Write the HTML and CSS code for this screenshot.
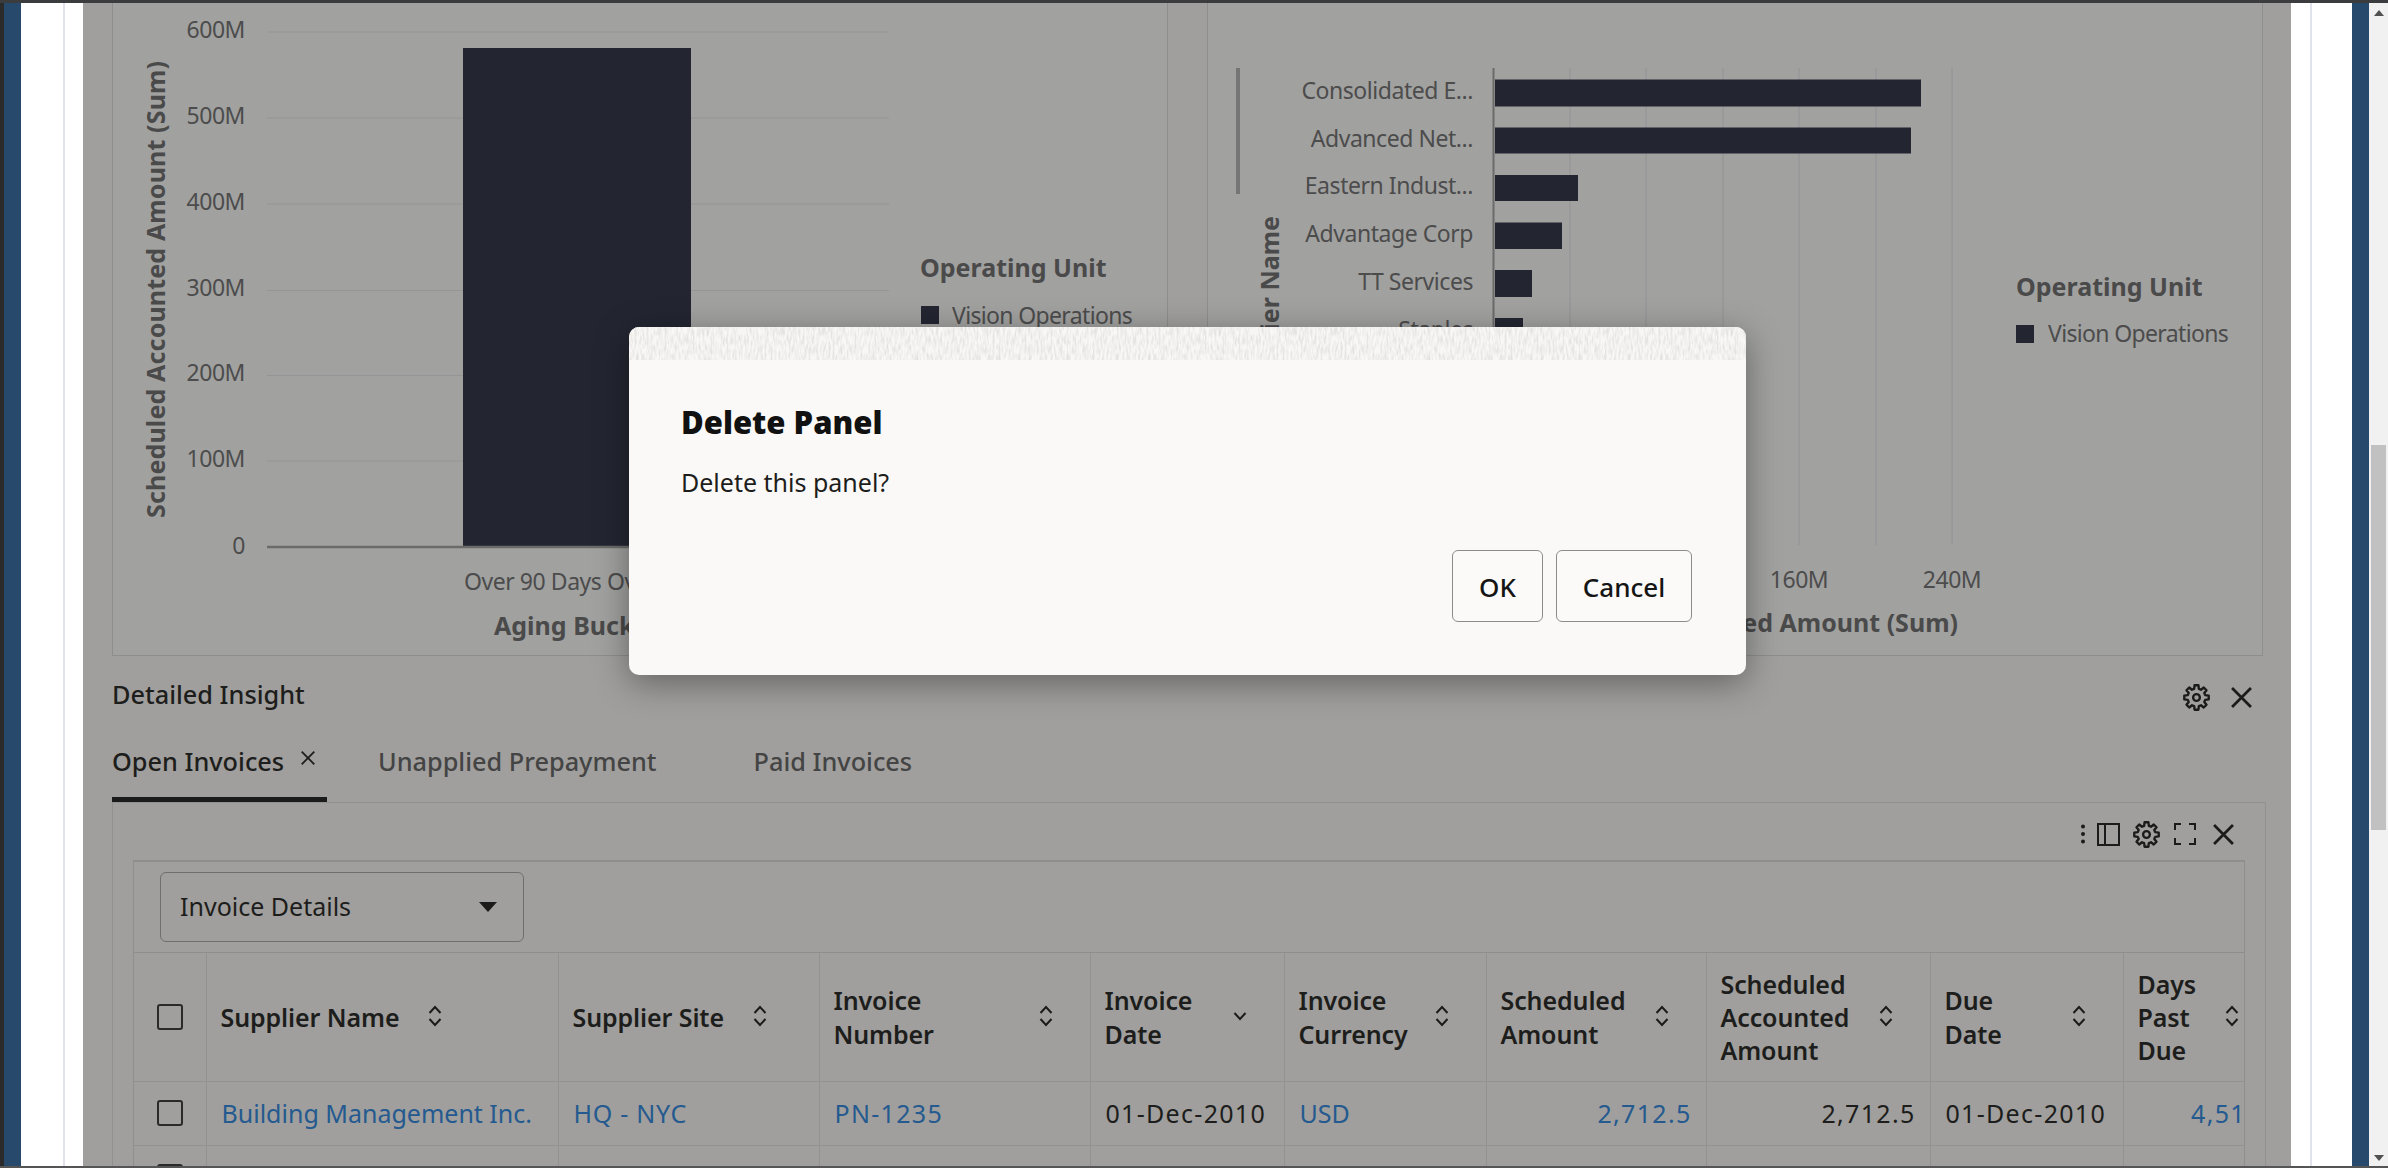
FILE: index.html
```html
<!DOCTYPE html>
<html lang="en">

<head>
  <meta charset="UTF-8">
  <meta name="viewport" content="width=device-width, initial-scale=1.0">
  <title>Delete Panel</title>
  <link rel="stylesheet" href="styles.css">
</head>

<body>
  <svg class="defs" aria-hidden="true">
    <symbol id="gear" viewBox="0 0 24 24">
      <polygon points="9.93,4.27 10.28,1.14 13.72,1.14 14.07,4.27 16,5.07 18.47,3.1 20.9,5.53 18.93,8 19.73,9.93 22.86,10.28 22.86,13.72 19.73,14.07 18.93,16 20.9,18.47 18.47,20.9 16,18.93 14.07,19.73 13.72,22.86 10.28,22.86 9.93,19.73 8,18.93 5.53,20.9 3.1,18.47 5.07,16 4.27,14.07 1.14,13.72 1.14,10.28 4.27,9.93 5.07,8 3.1,5.53 5.53,3.1 8,5.07" fill="none" stroke="currentColor" stroke-width="2.1" stroke-linejoin="round" />
      <circle cx="12" cy="12" r="3" fill="none" stroke="currentColor" stroke-width="2.1" />
    </symbol>
    <symbol id="close" viewBox="0 0 20 20">
      <path d="M1 1 19 19M19 1 1 19" fill="none" stroke="currentColor" stroke-width="2.6" />
    </symbol>
    <symbol id="sort" viewBox="0 0 14 22">
      <path d="M1.500 8 7 2l5.500 6M1.500 14 7 20l5.500-6" fill="none" stroke="currentColor" stroke-width="2" />
    </symbol>
    <symbol id="sortdown" viewBox="0 0 14 22">
      <path d="M1.500 8 7 14l5.500-6" fill="none" stroke="currentColor" stroke-width="2" />
    </symbol>
    <filter id="grain" x="0" y="0" width="100%" height="100%" color-interpolation-filters="sRGB">
      <feTurbulence type="fractalNoise" baseFrequency="0.5 0.11" numOctaves="2" seed="4" />
      <feColorMatrix values="0 0 0 0 0.89  0 0 0 0 0.885  0 0 0 0 0.875  2.4 0 0 0 -0.9" />
    </filter>
  </svg>

  <div class="topline"></div>
  <div class="shell">
    <div class="edge"></div>
    <div class="rail"></div>
    <div class="gutter gutter-left"></div>

    <main class="main">
      <section class="charts">
        <div class="chart-panel">
          <svg class="chart" viewBox="113 3 1054 652">
            <g class="grid">
              <path d="M267 32H889M267 118H889M267 204H889M267 290.500H889M267 375.500H889M267 461H889" />
            </g>
            <rect class="bar" x="463" y="48" width="228" height="499" />
            <path class="axis" d="M267 547H889" />
            <g class="tick tick-end">
              <text x="245" y="38">600M</text>
              <text x="245" y="124">500M</text>
              <text x="245" y="210">400M</text>
              <text x="245" y="296">300M</text>
              <text x="245" y="381">200M</text>
              <text x="245" y="467">100M</text>
              <text x="245" y="554">0</text>
            </g>
            <text class="tick" x="464" y="590">Over 90 Days Over 60 Days</text>
            <text class="axis-title" x="494" y="635">Aging Bucket</text>
            <text class="axis-title title-long" transform="translate(165 518) rotate(-90)">Scheduled Accounted Amount (Sum)</text>
            <text class="axis-title" x="920" y="277">Operating Unit</text>
            <rect class="bar" x="921" y="306" width="18" height="18" />
            <text class="tick legend-label" x="952" y="324">Vision Operations</text>
          </svg>
        </div>

        <div class="chart-panel">
          <svg class="chart" viewBox="1208 3 1054 652">
            <g class="grid">
              <path d="M1570 68V545M1646 68V545M1723 68V545M1799 68V545M1876 68V545M1952 68V545" />
            </g>
            <rect class="scroll-mark" x="1236" y="68" width="4" height="126" />
            <path class="axis axis-thin" d="M1493.500 68V545" />
            <g class="bars">
              <rect class="bar" x="1495" y="79.500" width="426" height="27" />
              <rect class="bar" x="1495" y="127.500" width="416" height="26" />
              <rect class="bar" x="1495" y="175" width="83" height="26" />
              <rect class="bar" x="1495" y="222.500" width="67" height="26.500" />
              <rect class="bar" x="1495" y="270" width="37" height="27" />
              <rect class="bar" x="1495" y="318" width="28" height="27" />
            </g>
            <g class="tick tick-end">
              <text x="1473" y="99">Consolidated E...</text>
              <text x="1473" y="147">Advanced Net...</text>
              <text x="1473" y="194">Eastern Indust...</text>
              <text x="1473" y="242">Advantage Corp</text>
              <text x="1473" y="290">TT Services</text>
              <text x="1473" y="338">Staples</text>
            </g>
            <g class="tick tick-mid">
              <text x="1799" y="588">160M</text>
              <text x="1952" y="588">240M</text>
            </g>
            <text class="axis-title tick-end" x="1958" y="632">Scheduled Accounted Amount (Sum)</text>
            <text class="axis-title tick-end" transform="translate(1279 216) rotate(-90)">Supplier Name</text>
            <text class="axis-title" x="2016" y="296">Operating Unit</text>
            <rect class="bar" x="2016" y="325" width="18" height="18" />
            <text class="tick legend-label" x="2048" y="342">Vision Operations</text>
          </svg>
        </div>
      </section>

      <section class="insight">
        <div class="insight-head">
          <h2 class="insight-title">Detailed Insight</h2>
          <div class="insight-tools">
            <svg class="icon-gear"><use href="#gear" /></svg>
            <svg class="icon-close"><use href="#close" /></svg>
          </div>
        </div>

        <div class="tabs">
          <div class="tab tab-on">Open Invoices<svg class="tab-x"><use href="#close" /></svg></div>
          <div class="tab tab-second">Unapplied Prepayment</div>
          <div class="tab tab-third">Paid Invoices</div>
        </div>

        <div class="tab-body">
          <div class="toolbar">
            <svg class="tool-dots" viewBox="0 0 6 20"><circle cx="3" cy="2.500" r="2" /><circle cx="3" cy="10" r="2" /><circle cx="3" cy="17.500" r="2" /></svg>
            <svg class="tool-panel" viewBox="0 0 23 23"><path d="M1 1H22V22H1ZM8 1V22" /></svg>
            <svg class="icon-gear"><use href="#gear" /></svg>
            <svg class="tool-expand" viewBox="0 0 22 22"><path d="M1 7V1H7M15 1H21V7M21 15V21H15M7 21H1V15" /></svg>
            <svg class="icon-close"><use href="#close" /></svg>
          </div>

          <div class="report">
            <div class="report-bar">
              <div class="select">Invoice Details<span class="caret"></span></div>
            </div>
            <table class="grid-table">
              <colgroup>
                <col class="c-check"><col class="c-name"><col class="c-site"><col class="c-num"><col class="c-date">
                <col class="c-cur"><col class="c-amt"><col class="c-acc"><col class="c-due"><col class="c-days">
              </colgroup>
              <thead>
                <tr>
                  <th><span class="check"></span></th>
                  <th><div class="th-in th-tight">Supplier Name<svg class="sort"><use href="#sort" /></svg></div></th>
                  <th><div class="th-in th-tight">Supplier Site<svg class="sort"><use href="#sort" /></svg></div></th>
                  <th><div class="th-in">Invoice<br>Number<svg class="sort"><use href="#sort" /></svg></div></th>
                  <th><div class="th-in">Invoice<br>Date<svg class="sort"><use href="#sortdown" /></svg></div></th>
                  <th><div class="th-in">Invoice<br>Currency<svg class="sort"><use href="#sort" /></svg></div></th>
                  <th><div class="th-in">Scheduled<br>Amount<svg class="sort"><use href="#sort" /></svg></div></th>
                  <th><div class="th-in">Scheduled<br>Accounted<br>Amount<svg class="sort"><use href="#sort" /></svg></div></th>
                  <th><div class="th-in">Due<br>Date<svg class="sort"><use href="#sort" /></svg></div></th>
                  <th><div class="th-in">Days<br>Past<br>Due<svg class="sort"><use href="#sort" /></svg></div></th>
                </tr>
              </thead>
              <tbody>
                <tr>
                  <td><span class="check"></span></td>
                  <td><a href="#">Building Management Inc.</a></td>
                  <td class="wide-mid"><a href="#">HQ - NYC</a></td>
                  <td class="wide"><a href="#">PN-1235</a></td>
                  <td class="wide">01-Dec-2010</td>
                  <td><a href="#">USD</a></td>
                  <td class="num wide"><a href="#">2,712.5</a></td>
                  <td class="num wide">2,712.5</td>
                  <td class="wide">01-Dec-2010</td>
                  <td class="num wide"><a href="#">4,515</a></td>
                </tr>
                <tr>
                  <td><span class="check"></span></td>
                  <td></td><td></td><td></td><td></td><td></td><td></td><td></td><td></td><td></td>
                </tr>
              </tbody>
            </table>
          </div>
        </div>
      </section>

      <div class="dialog">
        <svg class="dialog-grain"><rect width="100%" height="100%" filter="url(#grain)" /></svg>
        <div class="dialog-body">
          <h1 class="dialog-title">Delete Panel</h1>
          <p class="dialog-text">Delete this panel?</p>
        </div>
        <div class="dialog-actions">
          <button class="btn btn-ok">OK</button>
          <button class="btn btn-cancel">Cancel</button>
        </div>
      </div>
    </main>

    <div class="gutter gutter-right"></div>
    <div class="rail"></div>
    <div class="scrollbar">
      <span class="arrow arrow-up"></span>
      <span class="thumb"></span>
      <span class="arrow arrow-down"></span>
    </div>
  </div>
  <div class="bottomline"></div>
</body>

</html>
```

FILE: styles.css
```css
html,body {
  margin: 0;
  height: 100%;
  overflow: hidden;
}

*,
*:before,
*:after {
  box-sizing: border-box;
}

body {
  display: flex;
  flex-direction: column;
  font-family: "Noto Sans", "Open Sans", sans-serif;
  color: #1d1d1c;
  background: #fff;
}

.defs {
  position: absolute;
  width: 0;
  height: 0;
}

.topline {
  height: 3px;
  flex: none;
  background: #3b3c3e;
}

.bottomline {
  height: 2px;
  flex: none;
  background: #555;
}

.shell {
  flex: 1;
  min-height: 0;
  display: flex;
}

.edge {
  width: 4px;
  background: #2b2b2b;
}

.rail {
  width: 17px;
  flex: none;
  background: #27496b;
}

.gutter {
  flex: none;
  background-color: #fff;
  background-repeat: no-repeat;
  background-image: linear-gradient(#e0e3ec, #e0e3ec);
  background-size: 2px 100%;
}

.gutter-left {
  width: 62px;
  background-position: 42px 0;
}

.gutter-right {
  width: 61px;
  background-position: 19px 0;
}

.main {
  position: relative;
  flex: 1;
  min-width: 0;
  overflow: hidden;
  padding: 0 28px 0 29px;
  background: #a09f9d;
}

/* charts */
.charts {
  display: grid;
  grid-template-columns: 1056px 1056px;
  column-gap: 39px;
  height: 653px;
}

.chart-panel {
  border: 1px solid #8e8e8d;
  border-top: none;
  background: #a1a1a0;
}

.chart {
  display: block;
  width: 1054px;
  height: 652px;
}

.grid path {
  fill: none;
  stroke: #959598;
  stroke-width: 1.200;
}

.axis {
  fill: none;
  stroke: #6b6b6a;
  stroke-width: 2.500;
}

.axis-thin {
  stroke-width: 2;
}

.bar {
  fill: #232631;
}

.scroll-mark {
  fill: #757575;
}

.tick,
.tick text {
  font-size: 23px;
  letter-spacing: -.45px;
  fill: #4c4c4c;
}

.tick.legend-label {
  letter-spacing: -.65px;
}

.tick-end,
.tick-end text {
  text-anchor: end;
}

.tick-mid text {
  text-anchor: middle;
}

.axis-title {
  font-size: 25px;
  font-weight: 700;
  fill: #4a4a4a;
}

.title-long {
  letter-spacing: .15px;
}

/* detail area */
.insight {
  margin-right: -3px;
}

.insight-head {
  height: 81px;
  display: flex;
  align-items: flex-start;
  justify-content: space-between;
  padding-top: 22px;
}

.insight-title {
  margin: 0;
  font-size: 25.300px;
  font-weight: 500;
  line-height: 32px;
}

.insight-tools {
  display: flex;
  align-items: center;
  gap: 21px;
  padding-top: 6px;
  padding-right: 14px;
  color: #1b1b1b;
}

.icon-gear {
  width: 27px;
  height: 27px;
  color: #1b1b1b;
}

.icon-close {
  width: 21px;
  height: 21px;
  color: #1b1b1b;
}

.tabs {
  display: flex;
  height: 65px;
}

.tab {
  font-size: 25.300px;
  font-weight: 500;
  line-height: 48px;
  color: #444;
}

.tab-on {
  width: 215px;
  display: flex;
  color: #1d1d1c;
  border-bottom: 5px solid #1b1b1b;
}

.tab-x {
  width: 14px;
  height: 14px;
  margin: 14px 0 0 17px;
  color: #1d1d1c;
}

.tab-second {
  margin-left: 51px;
}

.tab-third {
  margin-left: 97px;
}

.tab-body {
  border: 1px solid #919190;
  border-bottom: none;
  padding: 0 20px 0 20px;
  height: 400px;
}

.toolbar {
  height: 57px;
  display: flex;
  align-items: center;
  justify-content: flex-end;
  padding: 5px 11px 0 0;
  color: #1b1b1b;
}

.tool-dots {
  width: 6px;
  height: 20px;
  fill: #1b1b1b;
}

.tool-panel {
  width: 23px;
  height: 23px;
  margin-left: 11px;
  fill: none;
  stroke: #1b1b1b;
  stroke-width: 2;
}

.toolbar .icon-gear {
  margin-left: 13px;
}

.tool-expand {
  width: 22px;
  height: 22px;
  margin-left: 14px;
  fill: none;
  stroke: #1b1b1b;
  stroke-width: 2;
}

.toolbar .icon-close {
  margin-left: 17px;
}

.report {
  border: 1px solid #8e8e8d;
  border-top-width: 2px;
  border-bottom: none;
  overflow: hidden;
  height: 360px;
}

.report-bar {
  height: 91px;
  padding: 10px 0 0 26px;
  border-bottom: 1px solid #8e8e8d;
}

.select {
  width: 364px;
  height: 70px;
  display: flex;
  align-items: center;
  justify-content: space-between;
  padding: 0 26px 3px 19px;
  font-size: 25px;
  border: 1.500px solid #6f6f6f;
  border-radius: 6px;
}

.caret {
  width: 0;
  height: 0;
  margin-top: 2px;
  border-left: 9px solid transparent;
  border-right: 9px solid transparent;
  border-top: 10px solid #1b1b1b;
}

/* table */
.grid-table {
  width: 2142px;
  table-layout: fixed;
  border-collapse: collapse;
}

.c-check { width: 72px; }
.c-name { width: 352px; }
.c-site { width: 261px; }
.c-num { width: 271px; }
.c-date { width: 194px; }
.c-cur { width: 202px; }
.c-amt { width: 220px; }
.c-acc { width: 224px; }
.c-due { width: 193px; }
.c-days { width: 153px; }

.grid-table th,
.grid-table td {
  border-right: 1px solid #929291;
  border-bottom: 1px solid #929291;
  white-space: nowrap;
  overflow: hidden;
}

.grid-table th {
  height: 128px;
  padding: 2px 0 0 14px;
  text-align: left;
  font-size: 25px;
  font-weight: 600;
  letter-spacing: -.1px;
}

.grid-table td {
  height: 64px;
  padding: 0 0 0 15px;
  font-size: 25px;
  font-weight: 400;
}

.grid-table th:first-child,
.grid-table td:first-child {
  padding: 0 0 0 23px;
}

.th-in {
  position: relative;
  line-height: 33.400px;
  padding-right: 58px;
}

.th-in .sort {
  position: absolute;
  right: 37px;
  top: 50%;
  margin-top: -13px;
}

.th-tight {
  display: flex;
  align-items: center;
  gap: 29px;
  padding-right: 0;
}

.th-tight .sort {
  position: static;
  margin-top: -4px;
}

.sort {
  width: 14px;
  height: 22px;
  color: #1b1b1b;
}

.check {
  display: block;
  width: 26px;
  height: 26px;
  border: 2px solid #2a2a2a;
  border-radius: 3px;
}

a {
  color: #245a8f;
  text-decoration: none;
}

.grid-table td.wide {
  letter-spacing: 1.300px;
}

.grid-table td.wide-mid {
  letter-spacing: .75px;
}

.grid-table td.num {
  text-align: right;
  padding-right: 14px;
}

/* dialog */
.dialog {
  position: absolute;
  left: 546px;
  top: 324px;
  width: 1117px;
  height: 348px;
  display: flex;
  flex-direction: column;
  background: #faf9f7;
  border-radius: 10px;
  box-shadow: 0 8px 34px rgba(0, 0, 0, .38);
  overflow: hidden;
}

.dialog-grain {
  display: block;
  flex: none;
  width: 100%;
  height: 33px;
  background: #f8f7f5;
}

.dialog-body {
  flex: 1;
  padding: 43px 52px 0;
}

.dialog-title {
  margin: 0;
  font-size: 31px;
  font-weight: 900;
  line-height: 38px;
  color: #111;
}

.dialog-text {
  margin: 25px 0 0;
  font-size: 25px;
  line-height: 32px;
  color: #1d1d1c;
}

.dialog-actions {
  display: flex;
  justify-content: flex-end;
  gap: 13px;
  padding: 0 54px 53px;
}

.btn {
  height: 72px;
  padding: 2px 0 0;
  font-family: inherit;
  font-size: 26px;
  font-weight: 500;
  color: #151515;
  background: #fbfaf8;
  border: 1.500px solid #8c8c8c;
  border-radius: 6px;
}

.btn-ok {
  width: 91px;
}

.btn-cancel {
  width: 136px;
}

/* scrollbar */
.scrollbar {
  position: relative;
  width: 19px;
  flex: none;
  background: #f1f1f1;
}

.thumb {
  position: absolute;
  left: 2px;
  right: 2px;
  top: 442px;
  height: 385px;
  background: #c1c1c1;
}

.arrow {
  position: absolute;
  left: 5px;
  width: 0;
  height: 0;
  border-left: 5px solid transparent;
  border-right: 5px solid transparent;
}

.arrow-up {
  top: 7px;
  border-bottom: 6px solid #505050;
}

.arrow-down {
  bottom: 5px;
  border-top: 6px solid #505050;
}
```
